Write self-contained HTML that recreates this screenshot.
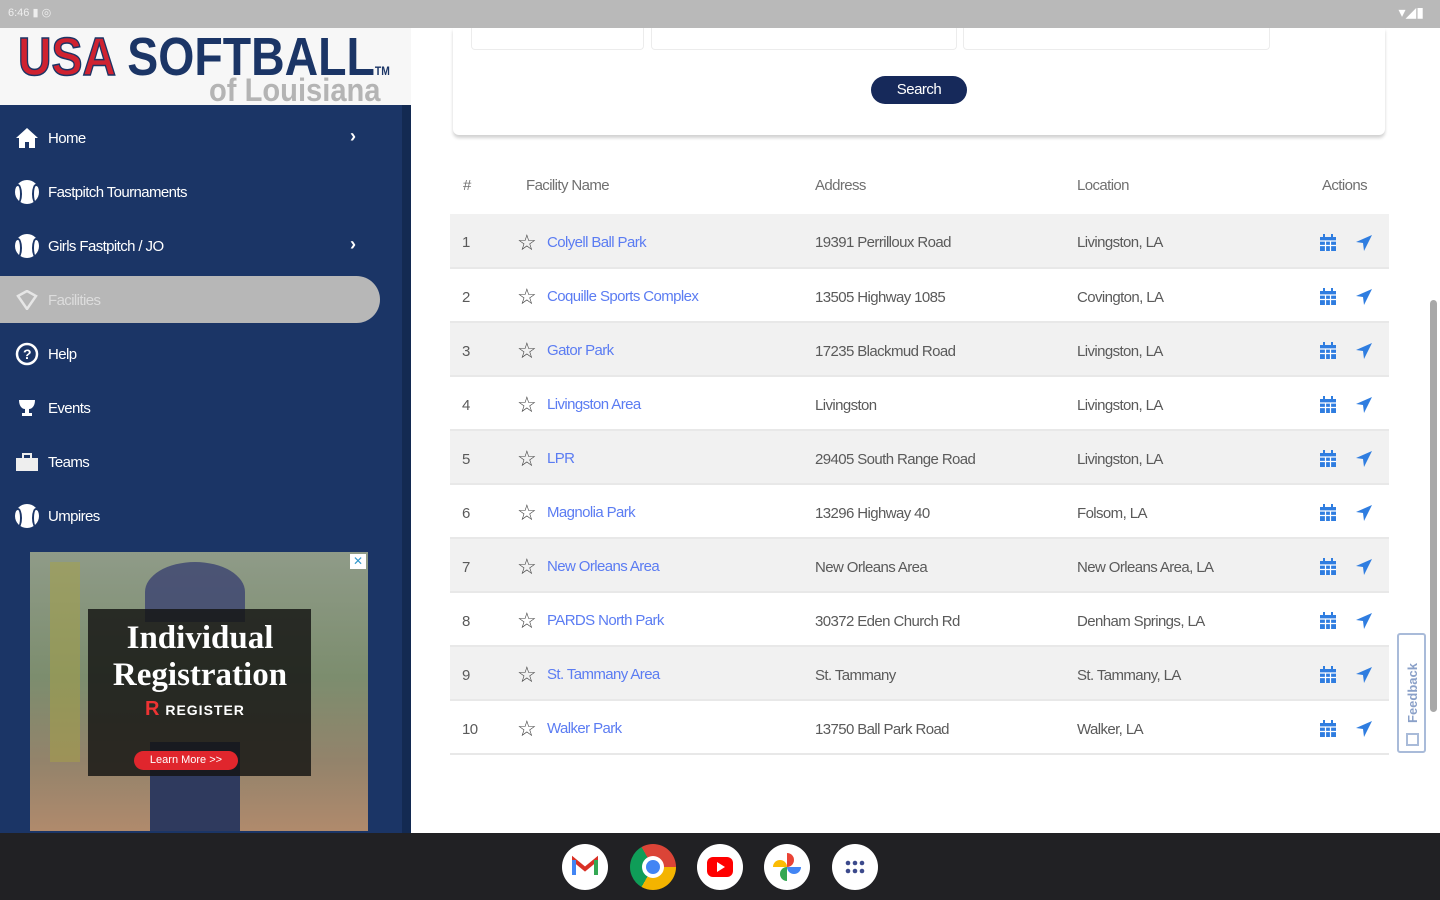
<!DOCTYPE html>
<html><head><meta charset="utf-8"><style>
*{margin:0;padding:0;box-sizing:border-box}
body{width:1440px;height:900px;overflow:hidden;background:#fff;font-family:"Liberation Sans",sans-serif;position:relative}
.abs{position:absolute}
#status{left:0;top:0;width:1440px;height:28px;background:#b9b9b9}
#side{left:0;top:28px;width:411px;height:805px;background:#1b3566}
#sideedge{left:402px;top:105px;width:9px;height:728px;background:#132a52}
#logo{left:0;top:28px;width:411px;height:77px;background:#f7f7f7}
.nav{position:absolute;left:14px;color:#fff;font-size:15px;letter-spacing:-0.6px;display:flex;align-items:center;height:30px}
.nav .ic{width:26px;height:26px;margin-right:8px;display:flex;align-items:center;justify-content:center}
.ball{width:24px;height:24px;border-radius:50%;background:#fff;position:relative}
.ball:before,.ball:after{content:"";position:absolute;top:4px;width:6px;height:16px;border:2px solid #1b3566;border-radius:50%}
.ball:before{left:-1px;border-left:none}.ball:after{right:-1px;border-right:none}
.chev{position:absolute;left:350px;color:#fff;font-size:18px;font-weight:bold}
table{position:absolute;left:450px;top:156px;width:939px;border-collapse:collapse;font-size:15px;color:#5a5a5a;letter-spacing:-0.6px}
td,th{height:54px;font-weight:normal;text-align:left;padding:0;border-bottom:2px solid #e8e8e8}
th{color:#707070;height:58px;border-bottom:none}
tr.g td{background:#f1f1f1}
a{color:#5b7cf2;text-decoration:none}
.star{display:inline-block;width:31px;padding-left:1px;vertical-align:middle;color:#444;font-size:22px;line-height:20px}
.dock{left:0;top:833px;width:1440px;height:67px;background:#212124}
.app{position:absolute;top:844px;width:46px;height:46px;border-radius:50%;background:#fff}
</style></head><body>
<div class="abs" id="status"><span style="position:absolute;left:8px;top:6px;color:#eee;font-size:11px">6:46 ▮ ◎</span><span style="position:absolute;right:16px;top:4px;color:#fff;font-size:14px">▾◢▮</span></div>
<div class="abs" id="side"></div>
<div class="abs" id="sideedge"></div>
<div class="abs" id="logo">
 <div style="position:absolute;left:18px;top:-2px;font:900 54px 'Liberation Sans',sans-serif;letter-spacing:0px;transform:scaleX(0.86);transform-origin:left;white-space:nowrap"><span style="color:#cf2230;-webkit-text-stroke:1.5px #1b3566">USA</span> <span style="color:#1b3566">SOFTBALL</span><span style="color:#1b3566;font-size:12px">TM</span></div>
 <div style="position:absolute;left:209px;top:46px;color:#b4b4b4;font:bold 32px 'Liberation Sans',sans-serif;line-height:32px;transform:scaleX(0.91);transform-origin:left;white-space:nowrap">of Louisiana</div>
</div>
<div class="abs" style="left:0;top:276px;width:380px;height:47px;background:#b7b7b7;border-radius:0 24px 24px 0"></div>
<div class="nav" style="top:123px"><span class="ic"><svg width="24" height="22" viewBox="0 0 24 22"><path d="M12 1L1 11h3v10h6v-6h4v6h6V11h3z" fill="#fff"/></svg></span>Home</div><span class="chev" style="top:126px">›</span>
<div class="nav" style="top:177px"><span class="ic"><span class="ball"></span></span>Fastpitch Tournaments</div>
<div class="nav" style="top:231px"><span class="ic"><span class="ball"></span></span>Girls Fastpitch / JO</div><span class="chev" style="top:234px">›</span>
<div class="nav" style="top:285px;color:#dcdcdc"><span class="ic"><svg width="22" height="20" viewBox="0 0 22 20"><path d="M2 6L11 1l9 5-9 13z" fill="none" stroke="#e6e6e6" stroke-width="2.5"/></svg></span>Facilities</div>
<div class="nav" style="top:339px"><span class="ic"><svg width="24" height="24"><circle cx="12" cy="12" r="10" fill="none" stroke="#fff" stroke-width="2.5"/><text x="12" y="17" fill="#fff" font-size="14" font-weight="bold" text-anchor="middle" font-family="Liberation Sans">?</text></svg></span>Help</div>
<div class="nav" style="top:393px"><span class="ic"><svg width="22" height="22"><path d="M3 3h16c0 6-3 9-6 9v4h3v3H6v-3h3v-4C6 12 3 9 3 3z" fill="#fff"/></svg></span>Events</div>
<div class="nav" style="top:447px"><span class="ic"><svg width="24" height="20"><rect x="1" y="6" width="22" height="13" fill="#eee"/><rect x="8" y="2" width="8" height="5" fill="none" stroke="#eee" stroke-width="2"/></svg></span>Teams</div>
<div class="nav" style="top:501px"><span class="ic"><span class="ball"></span></span>Umpires</div>
<!-- ad -->
<div class="abs" style="left:30px;top:552px;width:338px;height:279px;background:linear-gradient(180deg,#8f9b88 0%,#7c8d6e 45%,#93836b 75%,#b08a6c 100%)">
 <div style="position:absolute;left:20px;top:10px;width:30px;height:200px;background:#a8a145;opacity:.5"></div>
 <div style="position:absolute;left:115px;top:10px;width:100px;height:60px;background:#3b4270;border-radius:50% 50% 0 0;opacity:.8"></div>
 <div style="position:absolute;left:120px;top:190px;width:90px;height:89px;background:#2f3a5e"></div>
 <div style="position:absolute;left:58px;top:57px;width:223px;height:167px;background:rgba(20,20,18,.82)"></div>
 <div style="position:absolute;left:50px;top:68px;width:240px;text-align:center;color:#fff;font:bold 33px/37px 'Liberation Serif',serif;white-space:nowrap">Individual<br>Registration</div>
 <div style="position:absolute;left:115px;top:146px;color:#fff;font:bold 14px 'Liberation Sans',sans-serif;letter-spacing:1px"><span style="color:#e33;font-size:20px">R</span> REGISTER</div>
 <div style="position:absolute;left:104px;top:199px;width:104px;height:19px;border-radius:10px;background:#e0262d;color:#fff;font-size:11px;text-align:center;line-height:19px">Learn More &gt;&gt;</div>
 <div style="position:absolute;right:2px;top:2px;width:16px;height:15px;background:#fff;color:#39c;font-size:12px;text-align:center;line-height:15px">✕</div>
</div>
<!-- search card -->
<div class="abs" style="left:453px;top:28px;width:932px;height:107px;background:#fff;box-shadow:0 3px 3px rgba(0,0,0,.18);border-radius:0 0 6px 6px"></div>
<div class="abs" style="left:471px;top:28px;width:173px;height:22px;border:1px solid #ececec;border-top:none;border-radius:0 0 4px 4px"></div>
<div class="abs" style="left:651px;top:28px;width:306px;height:22px;border:1px solid #ececec;border-top:none;border-radius:0 0 4px 4px"></div>
<div class="abs" style="left:963px;top:28px;width:307px;height:22px;border:1px solid #ececec;border-top:none;border-radius:0 0 4px 4px"></div>
<div class="abs" style="left:871px;top:76px;width:96px;height:28px;background:#16295a;border-radius:14px;color:#fff;font-size:15px;text-align:center;line-height:28px;letter-spacing:-0.5px">Search</div>
<table>
<tr><th style="width:66px;padding-left:13px">#</th><th style="width:299px;padding-left:10px">Facility Name</th><th style="width:262px">Address</th><th style="width:230px">Location</th><th style="text-align:right;padding-right:22px">Actions</th></tr>
<tbody id="tb"></tbody>
</table>
<script>
var d=[["Colyell Ball Park","19391 Perrilloux Road","Livingston, LA"],["Coquille Sports Complex","13505 Highway 1085","Covington, LA"],["Gator Park","17235 Blackmud Road","Livingston, LA"],["Livingston Area","Livingston","Livingston, LA"],["LPR","29405 South Range Road","Livingston, LA"],["Magnolia Park","13296 Highway 40","Folsom, LA"],["New Orleans Area","New Orleans Area","New Orleans Area, LA"],["PARDS North Park","30372 Eden Church Rd","Denham Springs, LA"],["St. Tammany Area","St. Tammany","St. Tammany, LA"],["Walker Park","13750 Ball Park Road","Walker, LA"]];
var cal='<svg width="18" height="18" viewBox="0 0 18 18" style="vertical-align:middle"><rect x="1" y="3" width="16" height="14" fill="#2f7de0"/><rect x="4" y="0" width="2" height="4" fill="#2f7de0"/><rect x="12" y="0" width="2" height="4" fill="#2f7de0"/><path d="M1 7h16M1 11.5h16M6.5 7v10M11.5 7v10" stroke="#fff" stroke-width="1.2"/></svg>';
var nav='<svg width="18" height="18" viewBox="0 0 18 18" style="vertical-align:middle;margin-left:18px"><path d="M17 1L1 8l7 1 1 8z" fill="#2f7de0"/></svg>';
var h='';d.forEach(function(r,i){h+='<tr'+(i%2==0?' class="g"':'')+'><td style="padding-left:12px;padding-top:4px">'+(i+1)+'</td><td style="padding-top:4px"><span class="star">☆</span><a>'+r[0]+'</a></td><td style="padding-top:4px">'+r[1]+'</td><td style="padding-top:4px">'+r[2]+'</td><td style="text-align:right;padding-right:16px;padding-top:4px">'+cal+nav+'</td></tr>'});
document.getElementById('tb').innerHTML=h;
</script>
<div class="abs" style="left:1430px;top:300px;width:7px;height:412px;background:#a8a8a8;border-radius:4px"></div>
<div class="abs" style="left:1397px;top:633px;width:29px;height:120px;border:2px solid #a9bbd9;border-radius:3px;background:#fff"><div style="position:absolute;transform:rotate(-90deg);transform-origin:left top;color:#8aa0c8;font-size:13px;font-weight:bold;white-space:nowrap;top:88px;left:6px">Feedback</div><div style="position:absolute;left:7px;bottom:5px;width:13px;height:13px;border:2px solid #a9bbd9"></div></div>
<div class="abs dock"></div>
<div class="app" style="left:562px"><svg width="46" height="46"><path d="M12 31V16l11 9 11-9v15" fill="none" stroke="#d93025" stroke-width="4"/><path d="M12 16v15" stroke="#4285f4" stroke-width="4"/><path d="M34 16v15" stroke="#34a853" stroke-width="4"/></svg></div>
<div class="app" style="left:630px;background:conic-gradient(from -30deg,#db4437 0 120deg,#f4b400 120deg 240deg,#0f9d58 240deg 360deg)"><div style="position:absolute;left:12px;top:12px;width:22px;height:22px;border-radius:50%;background:#fff"></div><div style="position:absolute;left:16px;top:16px;width:14px;height:14px;border-radius:50%;background:#4285f4"></div></div>
<div class="app" style="left:697px"><div style="position:absolute;left:10px;top:13px;width:26px;height:20px;border-radius:6px;background:#f00"></div><div style="position:absolute;left:20px;top:18px;border-left:8px solid #fff;border-top:5px solid transparent;border-bottom:5px solid transparent"></div></div>
<div class="app" style="left:764px"><svg width="46" height="46"><path d="M23 23V9a7 7 0 0 1 0 14z" fill="#ea4335"/><path d="M23 23h14a7 7 0 0 1-14 0z" fill="#4285f4"/><path d="M23 23v14a7 7 0 0 1 0-14z" fill="#34a853"/><path d="M23 23H9a7 7 0 0 1 14 0z" fill="#fbbc04"/></svg></div>
<div class="app" style="left:832px"><svg width="46" height="46"><g fill="#3c4a8c"><circle cx="16" cy="19" r="2.3"/><circle cx="23" cy="19" r="2.3"/><circle cx="30" cy="19" r="2.3"/><circle cx="16" cy="27" r="2.3"/><circle cx="23" cy="27" r="2.3"/><circle cx="30" cy="27" r="2.3"/></g></svg></div>
</body></html>
